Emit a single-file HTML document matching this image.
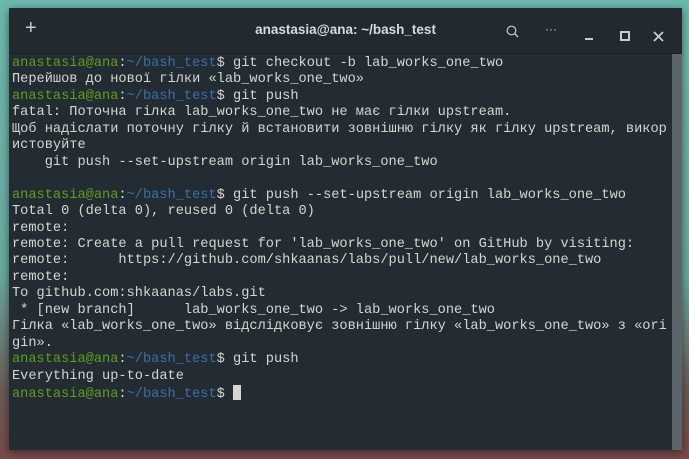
<!DOCTYPE html><html><head><style>
body{margin:0;width:689px;height:459px;overflow:hidden;background:linear-gradient(180deg,#6db8ae 0%,#6aa9a0 60%,#6a5a55 85%,#7a4a48 100%);font-family:"Liberation Mono",monospace}
.win{position:absolute;left:9px;top:8px;width:673px;height:442px;background:#232c32;box-shadow:0 2px 8px rgba(0,0,0,.5)}
.tb{height:45px;background:#222a30;position:relative;color:#d8dadb;font-family:"Liberation Sans",sans-serif;border-bottom:1px solid #1a2025}
.title{position:absolute;left:0;right:0;top:14px;text-align:center;font-size:13.5px;font-weight:bold}
.ic{position:absolute;top:12px;color:#c8ccce;font-size:15px}
.sb{position:absolute;right:0;top:46px;width:10px;bottom:0;background:#5c656a}
pre{margin:0;position:absolute;left:3px;top:48px;font-size:13.65px;line-height:16.45px;color:#d3d7cf;font-family:"Liberation Mono","DejaVu Sans Mono",monospace}
.g{color:#5e9d1f}.b{color:#3c6ea7}
.cur{display:inline-block;width:8px;height:15px;background:#d3d7cf;vertical-align:-3px}
</style></head><body><div class="win"><div class="tb">
<span class="ic" style="left:16px;font-size:20px;top:9px;font-weight:300">+</span>
<div class="title">anastasia@ana: ~/bash_test</div>
<svg style="position:absolute;left:497px;top:17px" width="14" height="14"><circle cx="5.5" cy="5.5" r="4.3" fill="none" stroke="#c8ccce" stroke-width="1.2"/><line x1="8.5" y1="8.5" x2="12" y2="12" stroke="#c8ccce" stroke-width="1.3"/></svg>
<span class="ic" style="left:536px;top:14px;font-size:12px">···</span>
<div style="position:absolute;left:576px;top:30px;width:8px;height:2px;background:#c8ccce"></div>
<div style="position:absolute;left:611px;top:23px;width:6px;height:6px;border:2px solid #c8ccce"></div>
<svg style="position:absolute;left:644px;top:23px" width="11" height="11"><path d="M1 1L10 10M10 1L1 10" stroke="#c8ccce" stroke-width="1.8"/></svg>
</div><div class="sb"></div>
<pre><span class="g">anastasia@ana</span>:<span class="b">~/bash_test</span>$ git checkout -b lab_works_one_two
Перейшов до нової гілки «lab_works_one_two»
<span class="g">anastasia@ana</span>:<span class="b">~/bash_test</span>$ git push
fatal: Поточна гілка lab_works_one_two не має гілки upstream.
Щоб надіслати поточну гілку й встановити зовнішню гілку як гілку upstream, викор
истовуйте
    git push --set-upstream origin lab_works_one_two

<span class="g">anastasia@ana</span>:<span class="b">~/bash_test</span>$ git push --set-upstream origin lab_works_one_two
Total 0 (delta 0), reused 0 (delta 0)
remote:
remote: Create a pull request for 'lab_works_one_two' on GitHub by visiting:
remote:      https://github.com/shkaanas/labs/pull/new/lab_works_one_two
remote:
To github.com:shkaanas/labs.git
 * [new branch]      lab_works_one_two -&gt; lab_works_one_two
Гілка «lab_works_one_two» відслідковує зовнішню гілку «lab_works_one_two» з «ori
gin».
<span class="g">anastasia@ana</span>:<span class="b">~/bash_test</span>$ git push
Everything up-to-date
<span class="g">anastasia@ana</span>:<span class="b">~/bash_test</span>$ <span class="cur"></span></pre>
</div></body></html>
